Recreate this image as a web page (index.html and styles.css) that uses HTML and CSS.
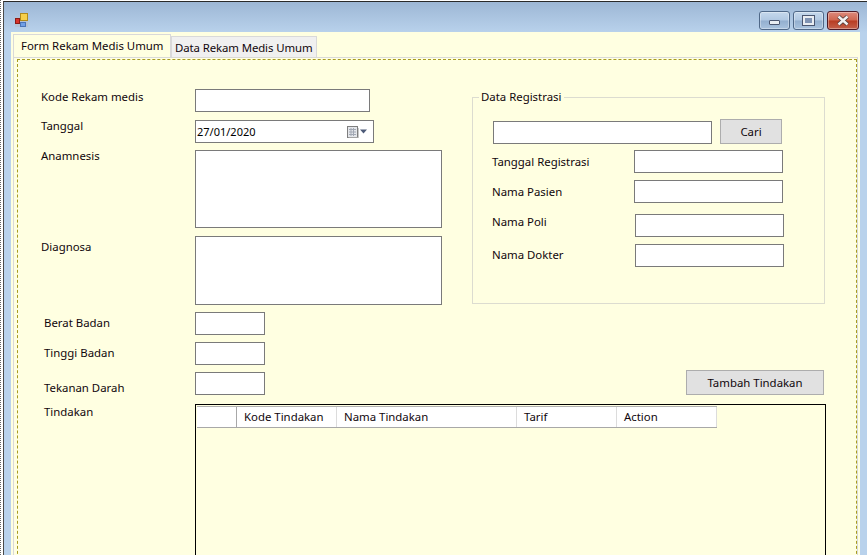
FILE: index.html
```html
<!DOCTYPE html>
<html lang="id">
<head>
<meta charset="utf-8">
<title>Form Rekam Medis Umum</title>
<link rel="stylesheet" href="styles.css">
</head>
<body>
<div class="window">
  <header class="titlebar">
    <svg class="app-icon" width="13" height="14" viewBox="0 0 13 14">
      <rect x="0" y="4" width="13" height="10" fill="#b4c3d6"/>
      <rect x="0.5" y="5.5" width="4" height="5" fill="#d8322a" stroke="#8c1c16"/>
      <rect x="5.5" y="0.5" width="7" height="7" fill="#f6cf4a" stroke="#b08a1c"/>
      <rect x="5.5" y="9.5" width="5" height="4" fill="#6f9fe6" stroke="#4a74b8"/>
    </svg>
    <div class="caption-buttons">
      <button class="cap cap-min"><span class="glyph-min"></span></button>
      <button class="cap cap-max"><span class="glyph-max"></span></button>
      <button class="cap cap-close">
        <svg width="14" height="11" viewBox="0 0 14 11"><path d="M2.5 1.5 L11.5 9.5 M11.5 1.5 L2.5 9.5" stroke="#4a3a3a" stroke-width="4"/><path d="M2.5 1.5 L11.5 9.5 M11.5 1.5 L2.5 9.5" stroke="#f4f1f1" stroke-width="2.4"/></svg>
      </button>
    </div>
  </header>
  <main class="client">
    <nav class="tabs">
      <div class="tab tab-active">Form Rekam Medis Umum</div>
      <div class="tab tab-idle">Data Rekam Medis Umum</div>
    </nav>
    <section class="page">
      <div class="dashed">
        <div class="upper">
          <div class="left">
            <div class="row row-kode"><label class="lbl">Kode Rekam medis</label><input class="field w175"></div>
            <div class="row row-tgl"><label class="lbl lbl-up">Tanggal</label>
              <div class="field date">
                <span class="date-text">27/01/2020</span>
                <svg class="cal" width="20" height="12" viewBox="0 0 20 12">
                  <rect x="0.5" y="0.5" width="10" height="11" fill="#e4e6ea" stroke="#7e7e7e"/>
                  <path d="M2 3.5H9M2 6H9M2 8.5H9M4 2V10M6.5 2V10" stroke="#a2a8b4"/>
                  <path d="M11.5 2V12H1.5" fill="none" stroke="#c8c8c8"/>
                  <path d="M13 3.5H20L16.5 7.5Z" fill="#4d5a78"/>
                </svg>
              </div>
            </div>
            <div class="row row-ana"><label class="lbl lbl-up">Anamnesis</label><textarea class="field area area-ana"></textarea></div>
            <div class="row row-dia"><label class="lbl lbl-dia">Diagnosa</label><textarea class="field area area-dia"></textarea></div>
            <div class="row row-berat"><label class="lbl lbl-in">Berat Badan</label><input class="field w70"></div>
            <div class="row row-tinggi"><label class="lbl lbl-in">Tinggi Badan</label><input class="field w70"></div>
            <div class="row row-tekanan"><label class="lbl lbl-in lbl-down">Tekanan Darah</label><input class="field w70"></div>
          </div>
          <div class="right">
            <fieldset class="group">
              <legend>Data Registrasi</legend>
              <div class="search"><input class="field w219"><button class="btn btn-cari">Cari</button></div>
              <div class="grow grow-a"><label>Tanggal Registrasi</label><input class="field w149"></div>
              <div class="grow grow-b"><label>Nama Pasien</label><input class="field w149"></div>
              <div class="grow grow-c"><label>Nama Poli</label><input class="field w149"></div>
              <div class="grow grow-d"><label>Nama Dokter</label><input class="field w149"></div>
            </fieldset>
            <button class="btn btn-tambah">Tambah Tindakan</button>
          </div>
        </div>
        <div class="lower">
          <label class="lbl lbl-in">Tindakan</label>
          <div class="grid-box">
            <div class="grid-head">
              <div class="th th-corner"></div>
              <div class="th th-kode">Kode Tindakan</div>
              <div class="th th-nama">Nama Tindakan</div>
              <div class="th th-tarif">Tarif</div>
              <div class="th th-action">Action</div>
            </div>
          </div>
        </div>
      </div>
    </section>
  </main>
</div>
</body>
</html>
```
FILE: styles.css
```css
* { box-sizing: border-box; }
html, body { margin: 0; height: 100%; overflow: hidden; }
body {
  width: 867px; height: 555px; background: #fff;
  font-family: "Noto Sans", sans-serif; font-size: 11.4px; color: #10060c;
  padding: 1px 0 0 2px;
  border-left: 1px dotted #666;
}
.window {
  width: 864px; height: 600px;
  border-top: 1px solid #2a2a2a; border-left: 1px solid #4a4a4a;
  background: #b9d2ec; padding: 0 7px 0 7px;
  background-image: linear-gradient(#9db7d5, #b9d2ec 31px);
}
.titlebar { height: 30px; margin: 0 -7px; padding: 0 8px 0 7px; display: flex; align-items: flex-start; justify-content: space-between; }
.app-icon { margin: 11px 0 0 4px; }
.caption-buttons { display: flex; gap: 3px; margin-top: 9px; }
.cap { width: 31px; height: 19px; padding: 0; border: 1px solid #4f6888; border-radius: 3px; display: flex; align-items: center; justify-content: center;
  background: linear-gradient(#c5d8ec, #b0c8e2 48%, #93afcf 52%, #a9c3de); box-shadow: inset 0 0 0 1px rgba(255,255,255,.35); }
.cap-close { width: 32px; border-color: #4c1a26; background: linear-gradient(#dd8a7c, #d0664f 48%, #b83c22 52%, #c4604a); }
.glyph-min { width: 11px; height: 5px; margin-top: 3px; background: #e9edf2; border: 1px solid #4a5670; border-radius: 1px; }
.glyph-max { width: 11px; height: 9px; border: 2px solid #e9edf2; outline: 1px solid #4a5670; background: #7f93b3; }

.client { width: 849px; height: 560px; background: #ffffe1; padding: 3px 0 0 2px; }
.tabs { display: flex; align-items: flex-end; height: 22px; position: relative; z-index: 1; }
.tab { white-space: nowrap; }
.tab-active { width: 158px; height: 23px; padding: 3px 0 0 7px; background: #ffffe1; border: 1px solid #d9d9d9; border-bottom: none; }
.tab-idle { width: 146px; height: 21px; padding: 3px 0 0 3px; background: #f0f0f0; border: 1px solid #d9d9d9; border-bottom: none; letter-spacing: -0.1px; }
.page { width: 845px; height: 530px; border: 1px solid #d9d9d9; padding: 1px 0 0 3px; }
.dashed { width: 840px; height: 520px; border: 1px dashed #a89c20; padding: 29px 0 0 23px; }

.upper { display: flex; gap: 30px; }
.left { width: 401px; }
.row { display: flex; }
.lbl { display: block; width: 154px; flex: none; line-height: 16px; white-space: nowrap; }
.lbl-up { margin-top: -2px; }
.lbl-dia { padding-top: 3px; }
.lbl-in { padding-left: 3px; }
.lbl-down { padding-top: 8px; }
.row-tgl { margin-top: 8px; }
.row-ana { margin-top: 7px; }
.row-dia { margin-top: 8px; }
.row-berat { margin-top: 7px; }
.row-berat .lbl, .row-tinggi .lbl { padding-top: 3px; }
.row-tinggi, .row-tekanan { margin-top: 7px; }

.field { display: block; height: 23px; padding: 0; border: 1px solid #7a7a7a; background: #fff; border-radius: 0; outline: none; font: inherit; resize: none; margin: 0; }
.w175 { width: 175px; } .w70 { width: 70px; } .w219 { width: 219px; } .w149 { width: 149px; }
.date { width: 179px; display: flex; align-items: center; justify-content: space-between; padding: 0 6px 0 1px; color: #000; }
.date-text { font-size: 11px; }
.cal { flex: none; }
.area-ana { width: 247px; height: 78px; }
.area-dia { width: 247px; height: 69px; }

.right { width: 353px; }
.group { display: block; margin: 0; width: 353px; height: 215px; border: 1px solid #dcdcd0; padding: 14px 0 0 20px; }
.group legend { padding: 0 3px 0 2px; margin-left: -14px; line-height: 16px; }
.search { display: flex; gap: 8px; align-items: flex-end; }
.btn { display: block; padding: 0; font: inherit; color: inherit; background: #e1e1e1; border: 1px solid #adadad; border-radius: 0; }
.btn-cari { width: 62px; height: 25px; }
.btn-tambah { width: 138px; height: 25px; margin: 66px 0 0 214px; }
.grow { display: flex; align-items: flex-start; margin-left: -1px; }
.grow label { width: 142px; flex: none; line-height: 16px; padding-top: 4px; white-space: nowrap; }
.grow-a { margin-top: 6px; }
.grow-b { margin-top: 7px; }
.grow-c { margin-top: 11px; }
.grow-c label { width: 143px; padding-top: 0; }
.grow-d { margin-top: 7px; }
.grow-d label { width: 143px; padding-top: 3px; }

.lower { display: flex; margin-top: 8px; }
.grid-box { width: 631px; height: 200px; border: 1px solid #000; border-bottom: none; padding: 1px 0 0 1px; }
.grid-head { display: flex; width: 520px; height: 22px; background: #fff; border-top: 1px solid #b0b0b0; border-bottom: 1px solid #a8a8a8; }
.th { height: 20px; line-height: 19px; padding-left: 7px; border-right: 1px solid #dcdcdc; white-space: nowrap; }
.th-corner { width: 40px; border-right-color: #a8a8a8; }
.th-kode { width: 100px; }
.th-nama { width: 180px; }
.th-tarif { width: 100px; }
.th-action { width: 100px; }
```
